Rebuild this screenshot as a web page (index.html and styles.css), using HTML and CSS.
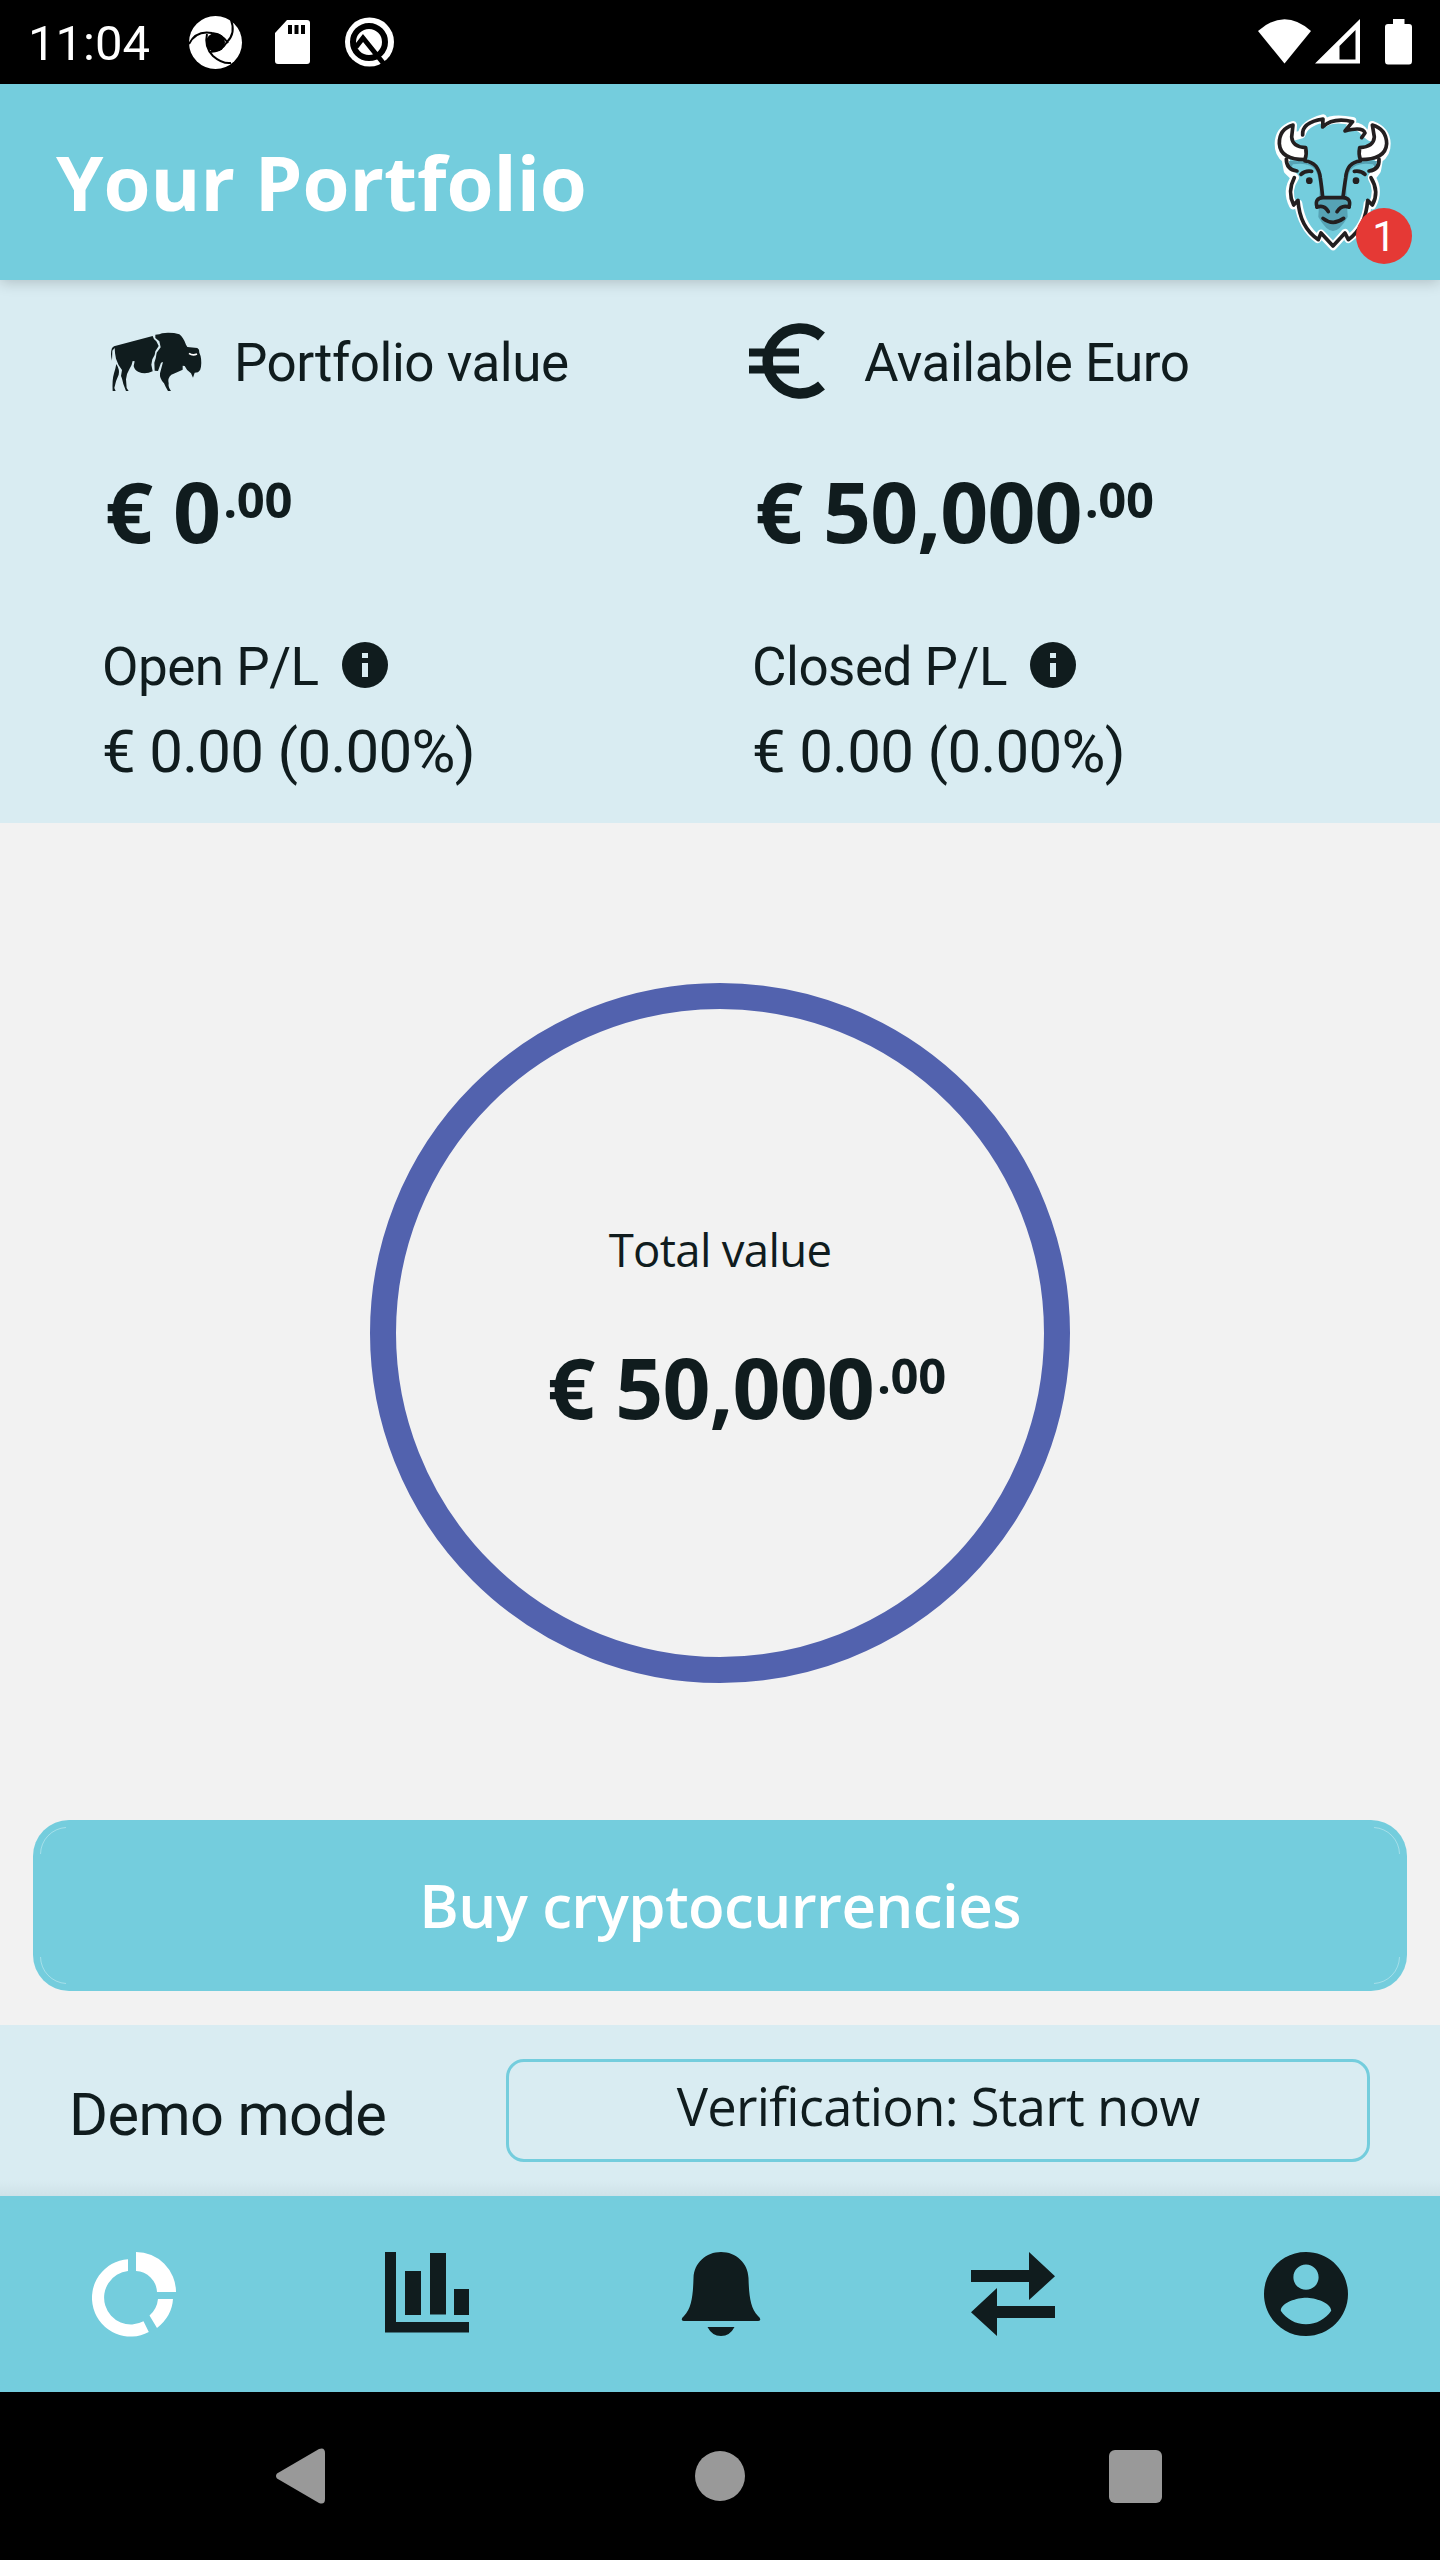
FILE: index.html
```html
<!DOCTYPE html>
<html lang="en">
<head>
<meta charset="utf-8">
<title>Your Portfolio</title>
<link rel="stylesheet" href="styles.css">
</head>
<body>
<div class="status">
  <span class="time">11:04</span>
  <svg class="status-left" width="220" height="84" viewBox="180 0 220 84">
    <circle cx="215.500" cy="42.500" r="26.500" fill="#fff"/>
    <circle cx="215.500" cy="42.500" r="9.500" fill="#000"/>
    <g fill="none" stroke="#000" stroke-width="2">
      <path d="M189 44Q196 30 212 33Q222 34 228 43"/>
      <path d="M231 20Q236 33 227 42Q221 52 210 52"/>
      <path d="M207 34Q204 47 213 56Q222 64 231 63"/>
    </g>
    <path fill="#fff" d="M287 20H307Q310 20 310 23V61Q310 64 307 64H278Q275 64 275 61V33Z"/>
    <path fill="#000" d="M288 25h4v9h-4zM294.500 25h4v9h-4zM301 25h4v9h-4z"/>
    <circle cx="369.500" cy="42" r="24.500" fill="#fff"/>
    <circle cx="369" cy="42" r="16" fill="none" stroke="#000" stroke-width="6"/>
    <path d="M356 47L363 38L384 64" fill="none" stroke="#000" stroke-width="5"/>
  </svg>
  <svg class="status-right" width="160" height="84" viewBox="1250 0 160 84" fill="#fff">
    <path d="M1258 31Q1284.500 7.500 1311 31L1284.500 63.500Z"/>
    <path fill-rule="evenodd" d="M1315 63.500L1360 19V63.500ZM1339.500 59.500H1355.500V30L1339.500 46Z"/>
    <path d="M1393 19H1404.500V24H1409Q1412 24 1412 27V61Q1412 64.500 1409 64.500H1388Q1385 64.500 1385 61V27Q1385 24 1388 24H1393Z"/>
  </svg>
</div>

<header class="header">
  <h1 class="title">Your Portfolio</h1>
  <div class="avatar">
    <svg width="120" height="140" viewBox="100 65 360 420" stroke-linecap="round" stroke-linejoin="round">
      <path fill="#74cddd" stroke="#fff" stroke-width="24" d="M186 132Q192 100 250 84L255 98Q280 80 338 92L332 108Q362 104 376 128L392 140L398 104Q440 120 441 160Q442 190 418 206L412 240L396 262Q420 300 398 345L384 340Q378 410 326 446L316 428L280 468L244 430L234 446Q186 410 176 340L160 345Q138 300 166 262L144 240L138 206Q116 190 117 160Q118 118 160 104L158 140L186 132Z"/>
      <path fill="#56a3b5" d="M148 212Q226 208 236 250L250 320V326H310V320L324 250Q334 208 412 212L408 238L400 222Q350 214 332 240Q322 262 320 300L324 380Q300 422 280 422Q260 422 236 380L240 300Q238 262 228 240Q210 214 160 222L150 238Z"/>
      <path fill="#74cddd" d="M202 222Q238 214 246 262L252 319H308L314 262Q322 214 358 206H202Z"/>
      <g fill="#fff" stroke="#231f20" stroke-width="11">
        <path d="M160 104Q118 116 119 160Q122 208 196 208Q202 192 198 172Q158 170 156 140Z"/>
        <path d="M398 104Q440 116 441 160Q438 208 362 208Q356 192 360 172Q402 170 404 140Z"/>
      </g>
      <g fill="none" stroke="#231f20" stroke-width="11">
        <path d="M189 134Q186 96 250 86L249 110Q280 80 339 94L316 122Q370 108 376 128L366 142"/>
        <path d="M140 206Q140 238 172 242M418 206Q420 238 388 242"/>
        <path d="M196 212Q236 216 242 262Q246 288 249 320M362 212Q322 216 318 262Q314 288 310 320"/>
        <path d="M184 252Q196 240 216 243M376 252Q364 240 344 243"/>
        <path d="M164 262Q142 304 162 344L175 330Q180 410 236 448L244 428L280 467L316 428L326 448Q378 410 384 330L398 344Q420 304 394 262"/>
        <path d="M232 350Q224 324 250 322H310Q336 324 328 350"/>
        <path d="M232 350Q254 342 266 364M328 350Q306 342 292 364M250 384Q280 408 312 384"/>
      </g>
      <circle cx="209" cy="271" r="10" fill="#231f20"/><circle cx="349" cy="271" r="10" fill="#231f20"/>
    </svg>
    <span class="badge">1</span>
  </div>
</header>

<main class="main">
  <section class="summary">
    <div class="col">
      <div class="label">
        <svg class="buffalo" width="94" height="64" viewBox="60 60 282 192" fill="#101c1e">
          <path d="M72 109L188 78Q190 88 199 94L206 108L196 124Q196 136 187 148L184 164L188 184Q166 194 146 186Q134 182 131 168L134 154L128 153Q126 166 118 178Q108 194 108 208L110 234L116 243H108L100 222Q96 204 93 198L96 180Q84 166 78 146Q74 126 74 114L67 122L66 152Q60 130 66 114Z"/>
          <path d="M79 162Q90 180 86 194Q76 214 73 234L77 243H68Q66 210 72 190Q76 178 79 162Z"/>
          <path d="M196 74L208 73L216 70L234 68L252 69L268 73Q280 82 288 104L292 111L322 114Q329 118 328 128Q336 144 333 170Q332 182 324 187L314 188L309 203L303 190Q290 182 284 168L278 167V179Q258 188 244 194Q232 204 236 220Q234 232 243 243H234Q226 230 222 220Q208 206 210 190L219 156L213 158L204 183L194 182L193 158Q198 146 200 128L212 112L208 94L196 84Z"/>
          <path fill="none" stroke="#fff" stroke-width="5" d="M297 130Q308 138 321 132"/>
        </svg>
        <span>Portfolio value</span>
      </div>
      <div class="amount">€ 0<span class="cents">.00</span></div>
      <div class="pl"><span>Open P/L</span><i class="info"></i></div>
      <div class="change">€ 0.00 (0.00%)</div>
    </div>
    <div class="col">
      <div class="label label-euro">
        <svg class="euro" width="76" height="76" viewBox="0 0 76 76" fill="none" stroke="#101c1e">
          <path stroke-width="10.500" d="M72.500 13.500A32.500 32.500 0 1 0 72.500 62.500"/>
          <path stroke-width="8" d="M0 29.500H50M0 46.500H50"/>
        </svg>
        <span>Available Euro</span>
      </div>
      <div class="amount">€ 50,000<span class="cents">.00</span></div>
      <div class="pl"><span>Closed P/L</span><i class="info"></i></div>
      <div class="change">€ 0.00 (0.00%)</div>
    </div>
  </section>

  <section class="chart">
    <div class="ring">
      <div class="ring-label">Total value</div>
      <div class="amount ring-amount">€ 50,000<span class="cents">.00</span></div>
    </div>
  </section>

  <div class="action">
    <button class="buy">
      <svg class="buy-edge" width="1374" height="171" viewBox="0 0 1374 171" fill="none" stroke="#fff" stroke-opacity=".35">
        <path d="M7.500 34A27 27 0 0 1 33 7.500M1341 7.500A27 27 0 0 1 1366.500 34M1366.500 137A27 27 0 0 1 1341 163.500M33 163.500A27 27 0 0 1 7.500 137"/>
      </svg>
      <span>Buy cryptocurrencies</span>
    </button>
  </div>

  <section class="demo">
    <span class="demo-text">Demo mode</span>
    <button class="verify">Verification: Start now</button>
  </section>
</main>

<nav class="tabs">
  <svg width="84" height="84" viewBox="92 2252 84 84" fill="#fff">
    <path d="M128 2259.200V2271A26.800 26.800 0 1 0 143.500 2321.300L148.800 2332A38.700 38.700 0 1 1 128 2259.200Z"/>
    <path d="M136 2252A40 40 0 0 1 176 2292H157A22 22 0 0 0 136 2271Z"/>
    <path d="M158 2299H173Q172 2316 157 2328L149.500 2315.500Q157 2309 158 2299Z"/>
  </svg>
  <svg width="84" height="84" viewBox="0 0 84 84" fill="#101c1e">
    <path d="M0 0H11V70H84V80.500H0ZM20 19H36V63H20ZM45 1H61V62.500H45ZM69 37H84V63H69Z"/>
  </svg>
  <svg width="84" height="84" viewBox="-1 0 84 84" fill="#101c1e">
    <path d="M42 0C57 0 69 11 69.500 26C70 42 71 56 79 64Q82 66.500 81 68Q81 69 79 69H5Q3 69 3 68Q2 66.500 5 64C13 56 14 42 14.500 26C15 11 27 0 42 0ZM28.500 75H55.500Q51 84 42 84Q33 84 28.500 75Z"/>
  </svg>
  <svg width="84" height="84" viewBox="0 0 84 84" fill="#101c1e">
    <path d="M0 18H58V0L84 24.300L58 48V30H0ZM84 54H26V36L0 60.300L26 84V66H84Z"/>
  </svg>
  <svg width="84" height="84" viewBox="2 2 20 20" fill="#101c1e">
    <path d="M12 2C6.480 2 2 6.480 2 12s4.480 10 10 10 10-4.480 10-10S17.520 2 12 2zm0 3c1.660 0 3 1.340 3 3s-1.340 3-3 3-3-1.340-3-3 1.340-3 3-3zm0 14.200c-2.500 0-4.710-1.280-6-3.220.030-1.990 4-3.080 6-3.080 1.990 0 5.970 1.090 6 3.080-1.290 1.940-3.500 3.220-6 3.220z"/>
  </svg>
</nav>

<footer class="system">
  <svg width="50" height="56" viewBox="0 0 50 56"><path fill="#999" d="M1 25.500L43 1Q49 -1 49 5V51Q49 57 43 55L1 30.500Q-1 28 1 25.500Z"/></svg>
  <i class="home"></i>
  <i class="recent"></i>
</footer>
</body>
</html>
```
FILE: styles.css
```css
* { box-sizing: border-box; }

body {
  margin: 0;
  width: 1440px;
  height: 2560px;
  display: flex;
  flex-direction: column;
  background: #f2f2f2;
  color: #101c1e;
  font-family: Roboto, "Liberation Sans", sans-serif;
  overflow: hidden;
}

svg { display: block; flex: none; overflow: visible; }

button { font: inherit; color: inherit; border: 0; margin: 0; padding: 0; }

.status {
  height: 84px;
  display: flex;
  background: #000;
  color: #fff;
}

.time { width: 180px; padding-left: 28px; font-size: 49px; line-height: 88px; }
.status-right { margin-left: auto; margin-right: 30px; }

.header {
  height: 196px;
  display: flex;
  justify-content: space-between;
  padding: 28px 47px 0 56px;
  background: #74cddd;
  box-shadow: 0 2px 14px rgba(0, 0, 0, 0.2);
  position: relative;
  z-index: 1;
}

.title {
  margin: 0;
  color: #fff;
  font: 700 76px/140px "Open Sans", "Noto Sans", sans-serif;
}

.avatar { position: relative; width: 120px; height: 140px; }

.badge {
  position: absolute;
  left: 83px;
  top: 96px;
  width: 56px;
  height: 56px;
  border-radius: 50%;
  background: #e53935;
  color: #fff;
  font-size: 42px;
  line-height: 57px;
  text-align: center;
}

.main { flex: 1; display: flex; flex-direction: column; }

.summary {
  height: 543px;
  display: flex;
  padding-left: 102px;
  background: #d9ecf2;
}

.col { width: 650px; }

.label {
  display: flex;
  height: 164px;
  font-size: 53px;
  line-height: 166px;
  letter-spacing: -0.5px;
}

.label span { margin-left: 30px; }
.label-euro span { margin-left: 39px; }
.buffalo { margin: 50px 0 0 8px; }
.euro { margin: 43px 0 0 -3px; }

.amount {
  display: flex;
  height: 136px;
  font: 700 84px/134px "Open Sans", "Noto Sans", sans-serif;
  letter-spacing: -0.9px;
  padding-left: 3px;
  white-space: pre;
}

.cents { font-size: 49px; line-height: 111px; margin-left: 3px; letter-spacing: -0.4px; }

.pl {
  display: flex;
  align-items: center;
  height: 82px;
  margin-top: 46px;
  font-size: 53px;
  line-height: 82px;
  letter-spacing: -0.5px;
}

.info {
  position: relative;
  width: 46px;
  height: 46px;
  margin: -4px 0 0 23px;
  border-radius: 50%;
  background: #101c1e;
}

.info::before, .info::after {
  content: "";
  position: absolute;
  left: 20px;
  width: 6px;
  background: #d9ecf2;
}

.info::before { top: 11px; height: 5px; }
.info::after { top: 21px; height: 14px; }

.change { height: 80px; font-size: 60px; line-height: 87px; letter-spacing: -0.7px; }

.chart { height: 997px; display: flex; justify-content: center; padding-top: 160px; }

.ring {
  width: 700px;
  height: 700px;
  border: 26.5px solid #5262ae;
  border-radius: 50%;
  display: flex;
  flex-direction: column;
  align-items: center;
  padding-top: 210px;
}

.ring-label { font: 400 45.5px/60px "Open Sans", "Noto Sans", sans-serif; letter-spacing: -0.7px; }
.ring-amount { margin: 41px 0 0 50px; }

.action { height: 205px; padding: 0 33px; }

.buy {
  position: relative;
  width: 1374px;
  height: 171px;
  border-radius: 36px;
  background: #74cddd;
  color: #fff;
  font: 600 60px/171px "Open Sans", "Noto Sans", sans-serif;
  letter-spacing: -0.6px;
}

.buy-edge { position: absolute; left: 0; top: 0; }

.demo {
  flex: 1;
  display: flex;
  justify-content: space-between;
  padding: 34px 70px 0 69px;
  background: linear-gradient(#d9ecf2 155px, #cfe2e8);
}

.demo-text { font-size: 59.5px; line-height: 112px; letter-spacing: -0.6px; }

.verify {
  width: 864px;
  height: 103px;
  border: 3.5px solid #74cddd;
  border-radius: 18px;
  background: none;
  font: 400 52.5px/86px "Open Sans", "Noto Sans", sans-serif;
  letter-spacing: -0.7px;
  padding-bottom: 10px;
}

.tabs {
  height: 196px;
  display: flex;
  justify-content: space-between;
  padding: 56px 92px;
  background: #74cddd;
}

.system {
  height: 168px;
  display: flex;
  align-items: center;
  justify-content: space-between;
  padding: 0 278px 0 276px;
  background: #000;
}

.home { width: 50px; height: 50px; margin-left: 4px; border-radius: 50%; background: #999; }
.recent { width: 53px; height: 53px; border-radius: 6px; background: #999; }
```
